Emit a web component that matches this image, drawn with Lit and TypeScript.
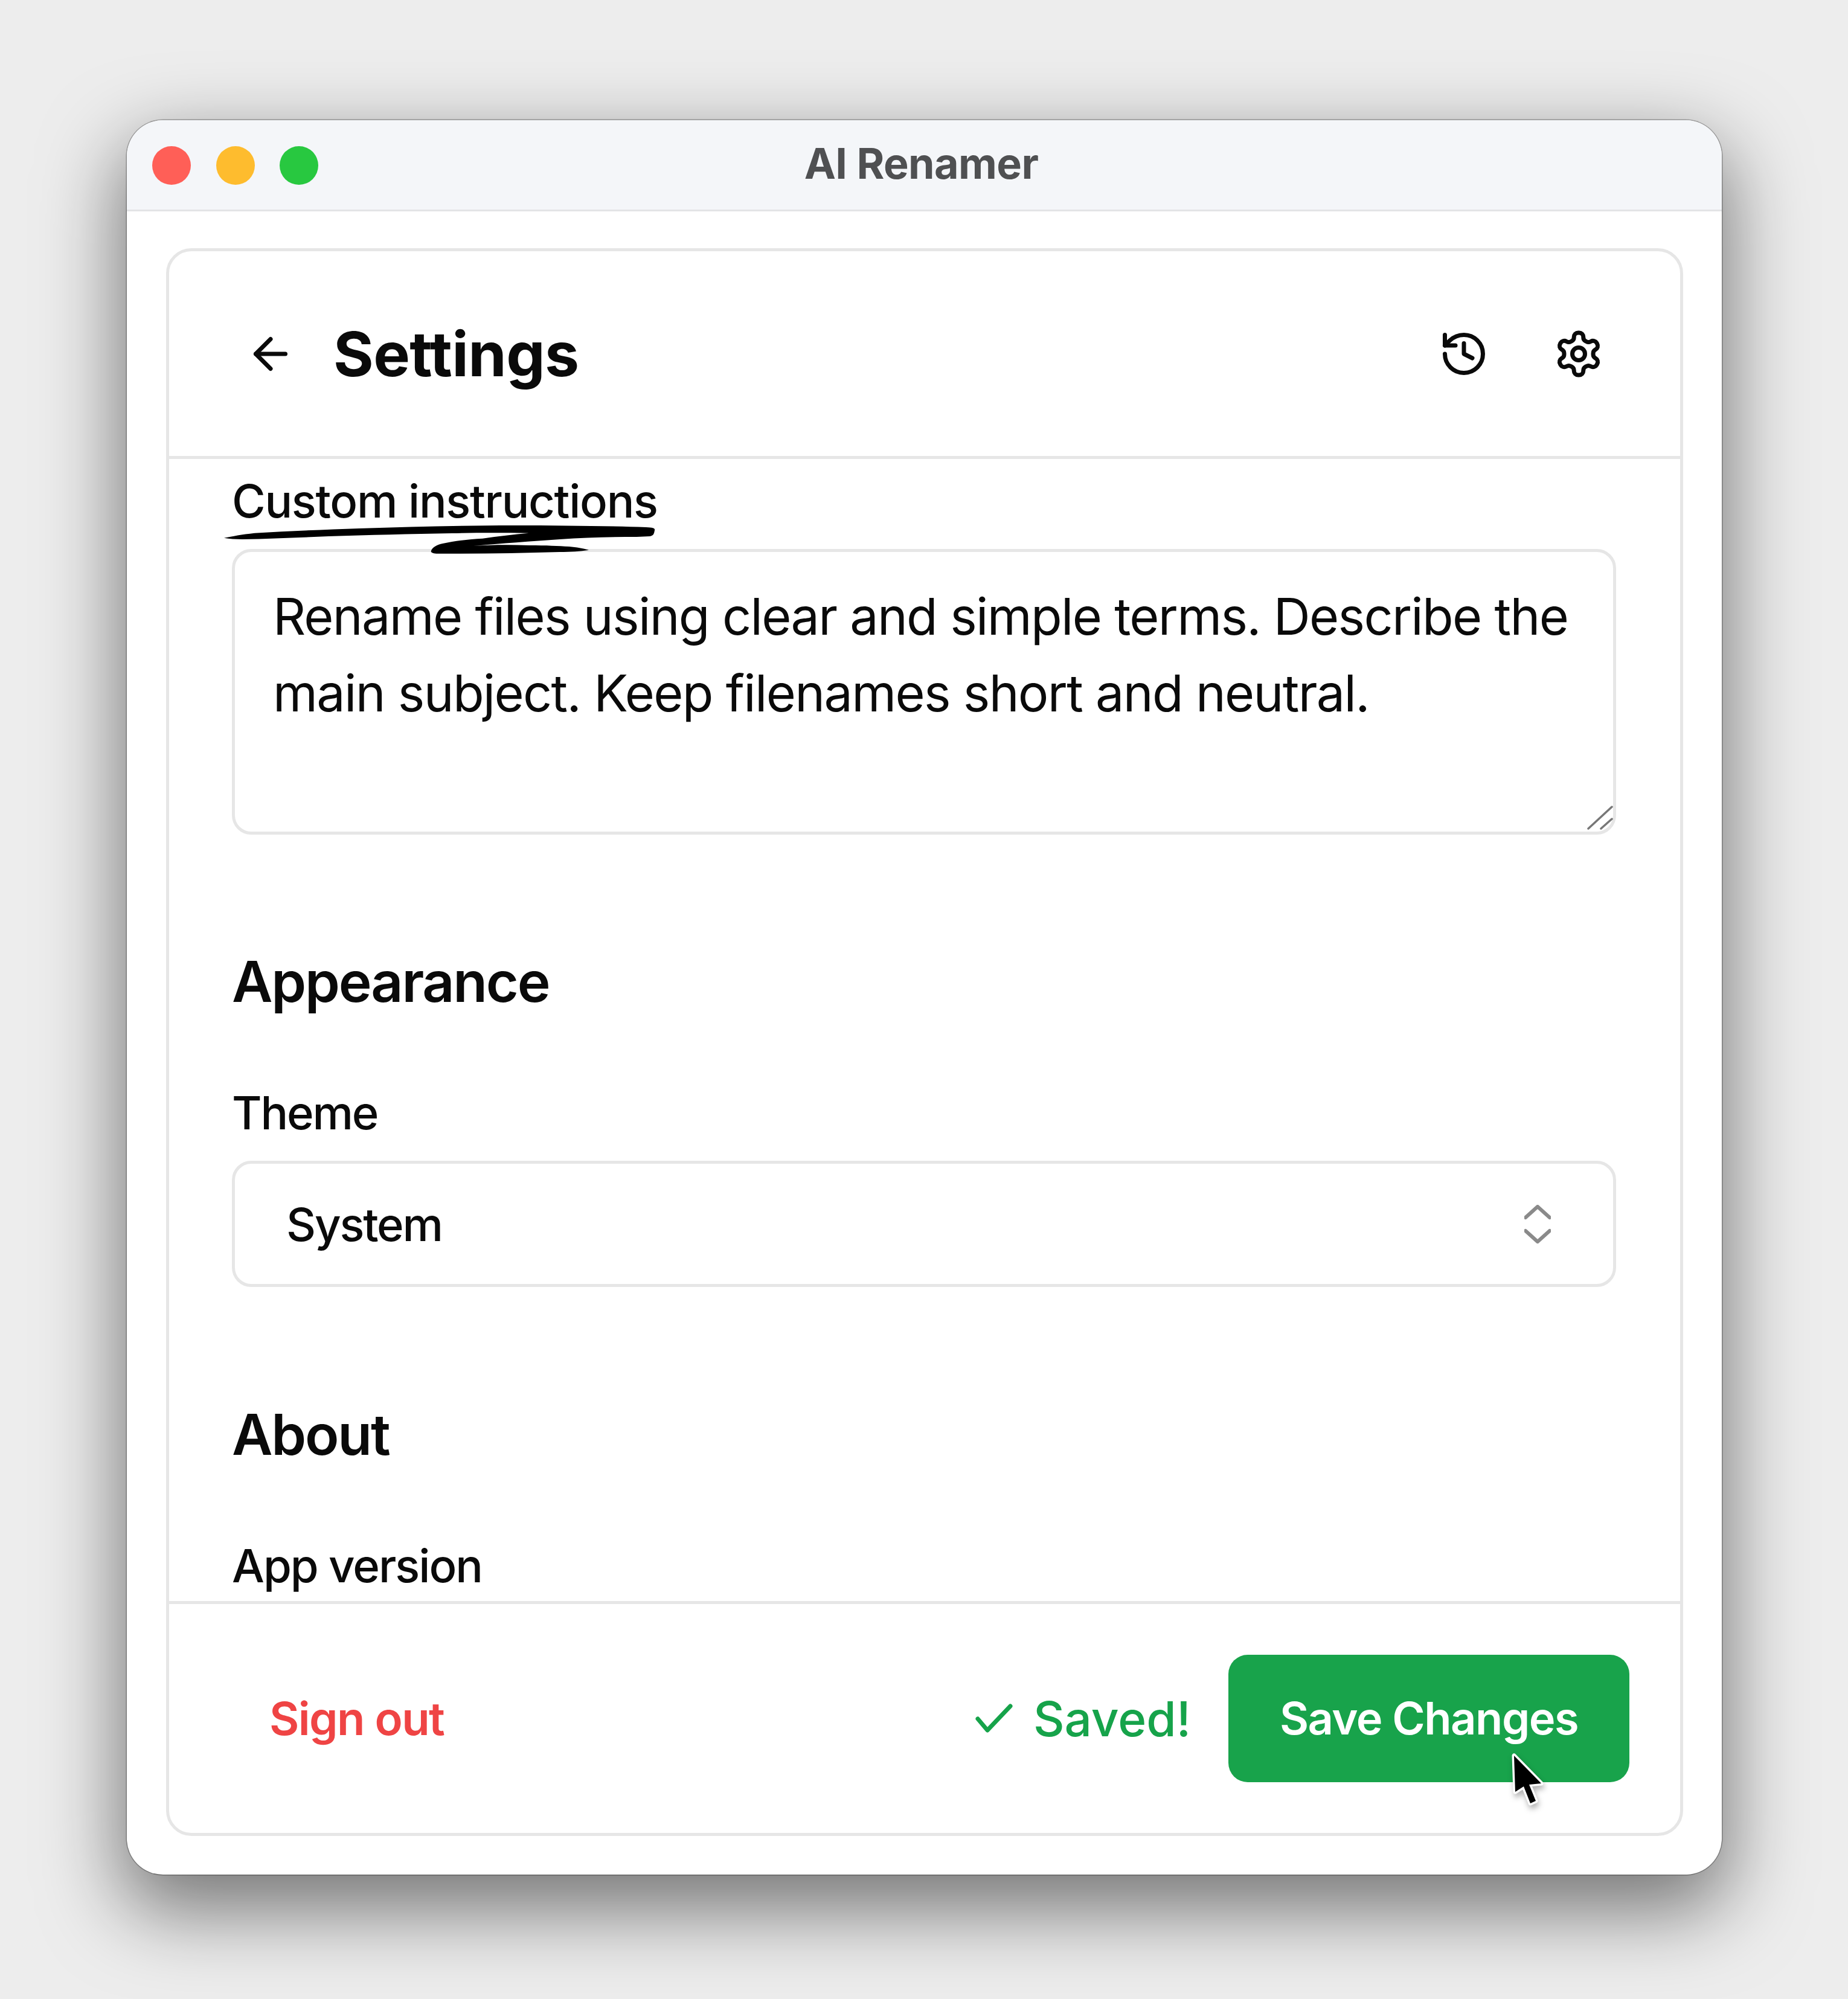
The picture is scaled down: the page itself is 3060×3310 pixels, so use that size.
import { LitElement, html, css, svg } from "lit";
import { customElement } from "lit/decorators.js";

const icon = (body: unknown, cls = "icon") => html`<svg class=${cls} viewBox="0 0 24 24" fill="none" stroke="currentColor" stroke-width="2" stroke-linecap="round" stroke-linejoin="round">${body}</svg>`;

@customElement("app-root")
export class AppRoot extends LitElement {
  static styles = css`
    :host { display: block; width: 3060px; height: 3310px; background: #ededed; overflow: hidden; font-family: Inter, "Liberation Sans", sans-serif; color: #0a0a0a; box-sizing: border-box; padding: 199px 209px 206px 210px; }
    * { box-sizing: border-box; }
    .window { position: relative; width: 2641px; height: 2905px; background: #fff; border-radius: 60px; display: flex; flex-direction: column; box-shadow: 0 0 0 1.5px rgba(0,0,0,.28), 0 50px 130px 10px rgba(0,0,0,.5); overflow: visible; }
    .titlebar { height: 151px; flex: none; background: #f4f6f9; border-bottom: 3px solid #e3e4e6; border-radius: 60px 60px 0 0; display: flex; align-items: center; justify-content: center; position: relative; padding-right: 4px; }
    .lights { position: absolute; left: 42px; top: 43px; display: flex; gap: 41.5px; }
    .light { width: 64px; height: 64px; border-radius: 50%; }
    .red { background: #ff5f57; } .yellow { background: #febc2e; } .green { background: #28c840; }
    .title { font-size: 70px; font-weight: 700; letter-spacing: -.6px; color: #4f5052; line-height: 1; margin-top: -5px; margin-left: -6px; }
    .body { flex: 1; min-height: 0; padding: 61px 64px 64px 65px; display: flex; }
    .card { flex: 1; min-width: 0; border: 5px solid #e6e6e6; border-radius: 42px; display: flex; flex-direction: column; overflow: hidden; }
    .head { flex: none; height: 344px; border-bottom: 5px solid #e6e6e6; display: flex; align-items: center; padding: 0 126px 0 126px; }
    .icon { width: 84px; height: 84px; flex: none; display: block; }
    h1 { margin: 0 0 0 62px; font-size: 102px; line-height: 1; font-weight: 700; letter-spacing: -.6px; flex: 1; }
    .tools { display: flex; gap: 106px; }
    .scroll { flex: 1; min-height: 0; overflow: hidden; padding: 27px 106px 0 104px; position: relative; }
    .label { font-size: 76px; line-height: 84px; font-weight: 500; letter-spacing: -1.3px; display: block; }
    .ta { position: relative; margin-top: 38px; height: 473px; border: 5px solid #e6e6e6; border-radius: 32px; padding: 43px 30px 0 63px; font-size: 84.4px; line-height: 126.6px; font-weight: 400; letter-spacing: -1.7px; }
    .grip { position: absolute; right: 0; bottom: 3px; width: 44px; height: 42px; }
    h2 { margin: 0; font-size: 92.8px; line-height: 126px; font-weight: 600; letter-spacing: -2.2px; }
    .appear { margin-top: 180px; }
    .theme { margin-top: 112px; letter-spacing: -2.2px; }
    .select { margin-top: 38px; height: 209px; border: 5px solid #e6e6e6; border-radius: 32px; display: flex; align-items: center; justify-content: space-between; padding: 0 103px 0 85px; font-size: 76px; font-weight: 500; letter-spacing: -2.2px; }
    .chev { width: 44px; height: 64px; flex: none; }
    .about { margin-top: 181px; }
    .ver { margin-top: 112px; letter-spacing: -2px; }
    .foot { flex: none; height: 384px; border-top: 5px solid #e6e6e6; display: flex; align-items: center; padding: 0 84px 1px 166px; }
    .signout { font-size: 76px; font-weight: 600; letter-spacing: -1.6px; color: #ef4444; flex: 1; }
    .saved { display: flex; align-items: center; color: #16a34a; font-size: 80px; font-weight: 500; margin-right: 62px; }
    .check { width: 62px; height: 50px; margin-right: 34px; flex: none; }
    .save { width: 664px; height: 211px; border-radius: 32px; background: #18a34b; color: #fff; font-size: 74px; font-weight: 600; letter-spacing: -1.5px; display: flex; align-items: center; justify-content: center; }
    .overlay { position: absolute; left: -210px; top: -199px; width: 3060px; height: 3310px; pointer-events: none; }
    .pointer { filter: drop-shadow(2px 6px 5px rgba(0,0,0,.3)); paint-order: stroke; }
  `;

  render() {
    return html`
      <div class="window">
        <div class="titlebar">
          <div class="lights"><span class="light red"></span><span class="light yellow"></span><span class="light green"></span></div>
          <span class="title">AI Renamer</span>
        </div>
        <div class="body">
          <div class="card">
            <div class="head">
              ${icon(svg`<path d="m12 19-7-7 7-7"/><path d="M19 12H5"/>`)}
              <h1>Settings</h1>
              <div class="tools">
                ${icon(svg`<path d="M3 12a9 9 0 1 0 9-9 9.75 9.75 0 0 0-6.74 2.74L3 8"/><path d="M3 3v5h5"/><path d="M12 7v5l4 2"/>`)}
                ${icon(svg`<path d="M12.22 2h-.44a2 2 0 0 0-2 2v.18a2 2 0 0 1-1 1.73l-.43.25a2 2 0 0 1-2 0l-.15-.08a2 2 0 0 0-2.73.73l-.22.38a2 2 0 0 0 .73 2.73l.15.1a2 2 0 0 1 1 1.72v.51a2 2 0 0 1-1 1.74l-.15.09a2 2 0 0 0-.73 2.73l.22.38a2 2 0 0 0 2.73.73l.15-.08a2 2 0 0 1 2 0l.43.25a2 2 0 0 1 1 1.73V20a2 2 0 0 0 2 2h.44a2 2 0 0 0 2-2v-.18a2 2 0 0 1 1-1.73l.43-.25a2 2 0 0 1 2 0l.15.08a2 2 0 0 0 2.73-.73l.22-.39a2 2 0 0 0-.73-2.73l-.15-.08a2 2 0 0 1-1-1.74v-.5a2 2 0 0 1 1-1.74l.15-.09a2 2 0 0 0 .73-2.73l-.22-.38a2 2 0 0 0-2.73-.73l-.15.08a2 2 0 0 1-2 0l-.43-.25a2 2 0 0 1-1-1.73V4a2 2 0 0 0-2-2z"/><circle cx="12" cy="12" r="3"/>`)}
              </div>
            </div>
            <div class="scroll">
              <span class="label">Custom instructions</span>
              <div class="ta">Rename files using clear and simple terms. Describe the main subject. Keep filenames short and neutral.
                <svg class="grip" viewBox="0 0 44 42" fill="none" stroke="#777" stroke-width="3.5" stroke-linecap="round"><path d="M3 40 42 4"/><path d="M24 40 42 24"/></svg>
              </div>
              <h2 class="appear">Appearance</h2>
              <span class="label theme">Theme</span>
              <div class="select"><span>System</span>
                <svg class="chev" viewBox="0 0 44 64" fill="none" stroke="#8a8a8a" stroke-width="6" stroke-linecap="round" stroke-linejoin="round"><path d="M2 21 22 3 42 21"/><path d="M2 43 22 61 42 43"/></svg>
              </div>
              <h2 class="about">About</h2>
              <span class="label ver">App version</span>
            </div>
            <div class="foot">
              <span class="signout">Sign out</span>
              <span class="saved"><svg class="check" viewBox="0 0 62 50" fill="none" stroke="currentColor" stroke-width="7" stroke-linecap="round" stroke-linejoin="round"><path d="M4 26 20 45 58 5"/></svg>Saved!</span>
              <div class="save">Save Changes</div>
            </div>
          </div>
        </div>
        <svg class="overlay" viewBox="0 0 3060 3310">
          <path fill="#000" d="M371 890.7 C385 888 400 885 421.6 882.7 C480 879 540 877 595 875 C680 872 770 870 850 870 C930 870 1010 871 1069.6 873 C1082 873.5 1085 875 1084 878 C1083 884 1082 887 1076 888 L1054 889 C1010 889 970 890 927 893 C880 896 830 900 784 904 C815 902 845 902 876 903 C905 903 925 904 942 905 C955 906 965 908 975 910.7 C960 913 945 914 927 914 C860 916 790 917 722.6 916.7 C715 916.5 713 914 714 911.7 C716 906 724 902 733 900 C755 895 778 893 799 891.7 C825 888 850 885 875.7 882.7 C830 882 790 882 748 883 C680 884 610 886 544 888 C495 890 450 892 401 893 C390 893 380 892 371 890.7Z"/>
          <path class="pointer" fill="#000" stroke="#fff" stroke-width="7" stroke-linejoin="round" d="M2507 2907 L2509 2967 L2523 2958 L2534 2986 L2543 2982 L2532 2955 L2552 2953Z"/>
        </svg>
      </div>
    `;
  }
}
